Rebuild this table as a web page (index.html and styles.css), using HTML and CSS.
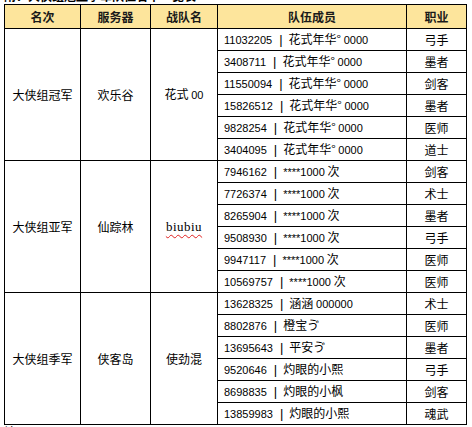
FILE: index.html
```html
<!DOCTYPE html>
<html lang="zh">
<head>
<meta charset="utf-8">
<title>大侠组</title>
<link rel="stylesheet" href="styles.css">
</head>
<body>
<div class="cap"><span class="cap-text">附：大侠组冠亚季军队伍名单一览表</span></div>
<table class="rank">
  <colgroup>
    <col class="c1"><col class="c2"><col class="c3"><col class="c4"><col class="c5">
  </colgroup>
  <thead>
    <tr class="head"><th>名次</th><th>服务器</th><th>战队名</th><th>队伍成员</th><th>职业</th></tr>
  </thead>
  <tbody>
    <tr><td class="grp" rowspan="6">大侠组冠军</td><td class="grp" rowspan="6">欢乐谷</td><td class="grp" rowspan="6">花式 <span class="num">00</span></td><td class="mem"><span class="num">11032205</span><span class="sep">|</span>花式年华° <span class="num">0000</span></td><td class="job">弓手</td></tr>
    <tr><td class="mem"><span class="num">3408711</span><span class="sep">|</span>花式年华° <span class="num">0000</span></td><td class="job">墨者</td></tr>
    <tr><td class="mem"><span class="num">11550094</span><span class="sep">|</span>花式年华° <span class="num">0000</span></td><td class="job">剑客</td></tr>
    <tr><td class="mem"><span class="num">15826512</span><span class="sep">|</span>花式年华° <span class="num">0000</span></td><td class="job">墨者</td></tr>
    <tr><td class="mem"><span class="num">9828254</span><span class="sep">|</span>花式年华° <span class="num">0000</span></td><td class="job">医师</td></tr>
    <tr><td class="mem"><span class="num">3404095</span><span class="sep">|</span>花式年华° <span class="num">0000</span></td><td class="job">道士</td></tr>

    <tr><td class="grp" rowspan="6">大侠组亚军</td><td class="grp" rowspan="6">仙踪林</td><td class="grp" rowspan="6"><span class="spell">biubiu</span></td><td class="mem"><span class="num">7946162</span><span class="sep">|</span><span class="num">****1000</span> 次</td><td class="job">剑客</td></tr>
    <tr><td class="mem"><span class="num">7726374</span><span class="sep">|</span><span class="num">****1000</span> 次</td><td class="job">术士</td></tr>
    <tr><td class="mem"><span class="num">8265904</span><span class="sep">|</span><span class="num">****1000</span> 次</td><td class="job">墨者</td></tr>
    <tr><td class="mem"><span class="num">9508930</span><span class="sep">|</span><span class="num">****1000</span> 次</td><td class="job">弓手</td></tr>
    <tr><td class="mem"><span class="num">9947117</span><span class="sep">|</span><span class="num">****1000</span> 次</td><td class="job">医师</td></tr>
    <tr><td class="mem"><span class="num">10569757</span><span class="sep">|</span><span class="num">****1000</span> 次</td><td class="job">医师</td></tr>

    <tr><td class="grp" rowspan="6">大侠组季军</td><td class="grp" rowspan="6">侠客岛</td><td class="grp" rowspan="6">使劲混</td><td class="mem"><span class="num">13628325</span><span class="sep">|</span>涵涵 <span class="num">000000</span></td><td class="job">术士</td></tr>
    <tr><td class="mem"><span class="num">8802876</span><span class="sep">|</span>橙宝ゔ</td><td class="job">医师</td></tr>
    <tr><td class="mem"><span class="num">13695643</span><span class="sep">|</span>平安ゔ</td><td class="job">墨者</td></tr>
    <tr><td class="mem"><span class="num">9520646</span><span class="sep">|</span>灼眼的小熙</td><td class="job">弓手</td></tr>
    <tr><td class="mem"><span class="num">8698835</span><span class="sep">|</span>灼眼的小枫</td><td class="job">剑客</td></tr>
    <tr><td class="mem"><span class="num">13859983</span><span class="sep">|</span>灼眼的小熙</td><td class="job">魂武</td></tr>
  </tbody>
</table>
<div class="foot"><span>填</span><span>1</span><span>1</span><span>1</span><span>1</span><span>1</span><span>1</span></div>
</body>
</html>
```

FILE: styles.css
```css
html, body {
  margin: 0;
  padding: 0;
  background: #ffffff;
}
body {
  padding: 0 4px;
  font-family: "Noto Sans CJK SC", "Liberation Sans", sans-serif;
  font-size: 12px;
  color: #000000;
}
.cap {
  height: 4px;
  overflow: hidden;
}
.cap-text {
  display: block;
  font-weight: bold;
  font-size: 12px;
  line-height: 12px;
  margin-top: -10px;
}
.rank {
  border-collapse: collapse;
  table-layout: fixed;
  width: 462px;
}
.c1 { width: 76px; }
.c2 { width: 70px; }
.c3 { width: 67px; }
.c4 { width: 189px; }
.c5 { width: 60px; }
.rank th, .rank td {
  border: 1px solid #000000;
  padding: 0;
  line-height: 14px;
}
.head th {
  background: #fde59c;
  height: 23px;
  font-weight: bold;
  font-size: 12px;
  color: #1a1a1a;
  text-align: center;
  vertical-align: middle;
}
.rank tbody tr {
  height: 22px;
}
.grp {
  text-align: center;
  vertical-align: middle;
}
.mem {
  padding-left: 6px !important;
  white-space: nowrap;
  vertical-align: middle;
}
.job {
  text-align: center;
  vertical-align: middle;
}
.num {
  font-family: "Liberation Sans", sans-serif;
  font-size: 11px;
}
.sep {
  font-family: "Liberation Sans", sans-serif;
  font-size: 13px;
  margin: 0 6px 0 7px;
}
.spell {
  font-family: "Liberation Serif", serif;
  font-size: 13px;
  letter-spacing: 0.5px;
  text-decoration: underline wavy #e02020;
  text-decoration-thickness: 1px;
  text-underline-offset: 3px;
}
.foot {
  display: flex;
  height: 14px;
  line-height: 14px;
  font-size: 12px;
}
.foot span:nth-child(1) { width: 80px; }
.foot span:nth-child(2) { width: 125px; }
.foot span:nth-child(3) { width: 36px; }
.foot span:nth-child(4) { width: 62px; }
.foot span:nth-child(5) { width: 55px; }
.foot span:nth-child(6) { width: 65px; }
```
